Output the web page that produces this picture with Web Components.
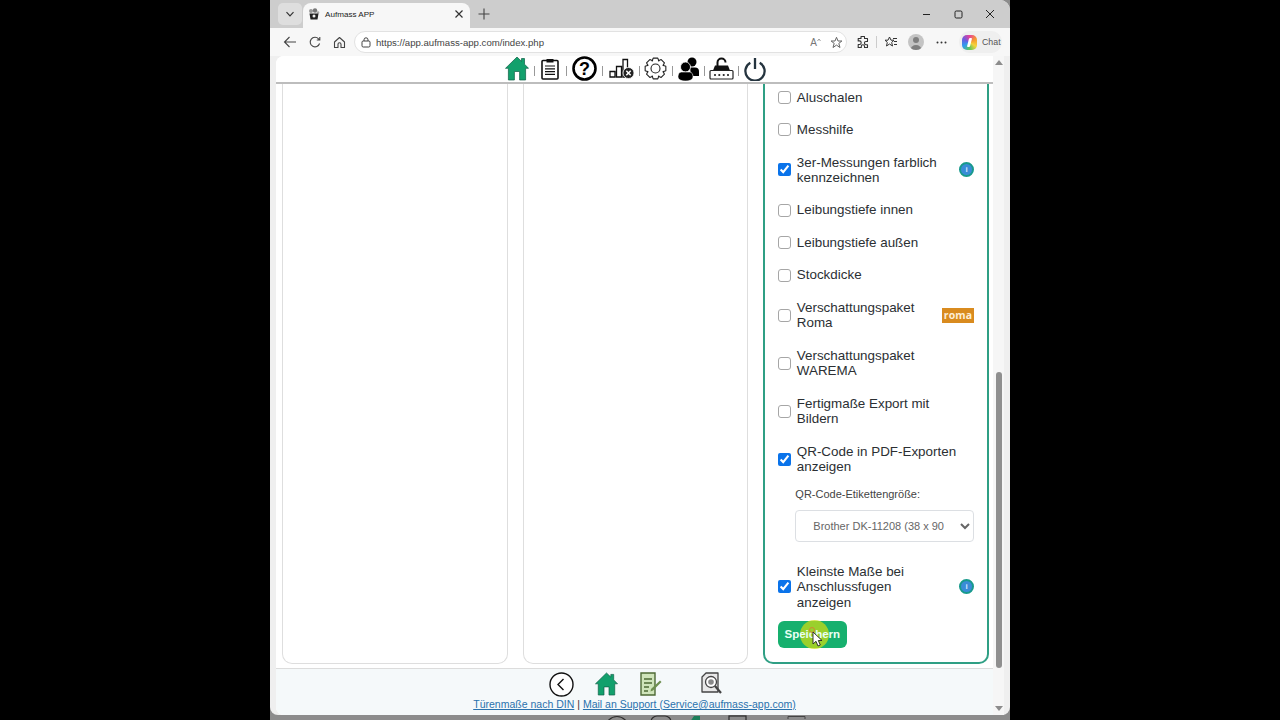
<!DOCTYPE html>
<html lang="de"><head><meta charset="utf-8"><title>Aufmass APP</title>
<style>
html,body{margin:0;height:100%;background:#000;overflow:hidden;font-family:"Liberation Sans",Arial,sans-serif}
body{display:flex;justify-content:center}
</style></head>
<body>
<browser-window>
  <tab-strip slot="tabs"></tab-strip>
  <browser-toolbar slot="toolbar"></browser-toolbar>
  <app-page slot="page">
    <app-nav slot="nav"></app-nav>
    <side-panel slot="col"></side-panel>
    <side-panel slot="col"></side-panel>
    <settings-card slot="col">
      <check-row>Aluschalen</check-row>
      <check-row>Messhilfe</check-row>
      <check-row checked info>3er-Messungen farblich kennzeichnen</check-row>
      <check-row>Leibungstiefe innen</check-row>
      <check-row>Leibungstiefe außen</check-row>
      <check-row>Stockdicke</check-row>
      <check-row roma>Verschattungspaket Roma</check-row>
      <check-row>Verschattungspaket WAREMA</check-row>
      <check-row>Fertigmaße Export mit Bildern</check-row>
      <check-row checked>QR-Code in PDF-Exporten anzeigen</check-row>
      <label-select label="QR-Code-Etikettengröße:" value="Brother DK-11208 (38 x 90 mm)"></label-select>
      <check-row checked info>Kleinste Maße bei<br>Anschlussfugen<br>anzeigen</check-row>
      <save-button>Speichern</save-button>
    </settings-card>
    <app-footer slot="footer"></app-footer>
  </app-page>
</browser-window>
<script>
function def(name, html){
  customElements.define(name, class extends HTMLElement{
    constructor(){super();const r=this.attachShadow({mode:'open'});r.innerHTML=typeof html==='function'?html(this):html;}
  });
}
const HOME=(w,h)=>`<svg width="${w}" height="${h}" viewBox="0 0 24 25"><path d="M12 1 L16.5 5.3 V2.5 H19.5 V8.2 L23.5 12.3 H20.6 V24 H14.6 V15.5 H9.4 V24 H3.4 V12.3 H.5 Z" fill="#12a06c" stroke="#0d5f45" stroke-width=".7" stroke-linejoin="round"/></svg>`;

def('browser-window',`<style>
:host{display:flex;flex-direction:column;width:740px;height:720px;background:#8c8c8c;position:relative}
.frame{flex:1;display:flex;flex-direction:column;background:#efefef;min-height:0;border-radius:0 10px 8px 8px;overflow:hidden}
.behind{display:block;flex:none}
</style><div class="frame"><slot name="tabs"></slot><slot name="toolbar"></slot><slot name="page"></slot></div>
<svg class="behind" width="740" height="5" viewBox="0 0 740 5"><g fill="none" stroke="#2d2d2d" stroke-width="1.200"><circle cx="347" cy="13" r="11.500"/><rect x="381" y="1" width="20" height="14" rx="6"/><rect x="459" y="1" width="17" height="12"/></g><path d="M415 14 L424 1 L430 1 V14Z" fill="#1c7f5a"/><path d="M518 4V1.500H535V4" fill="none" stroke="#444"/></svg>`);

def('tab-strip',`<style>
:host{display:flex;align-items:flex-end;height:28px;background:#cdcdcd;box-sizing:border-box;padding-left:8px;flex:none}
.drop{width:24px;height:22px;background:#dedede;border-radius:5px;margin:0 1px 3px 0;display:flex;align-items:center;justify-content:center}
.tab{width:167px;height:25px;background:#f7f7f7;border-radius:8px 8px 0 0;display:flex;align-items:center;padding:0 6px 3px 5px;box-sizing:border-box;gap:5px;color:#222;font:8.100px "Liberation Sans",sans-serif}
.tab span{flex:1}
.plus{margin:0 0 3px 3px;width:22px;height:22px;display:flex;align-items:center;justify-content:center}
.sp{flex:1}
.win{display:flex;align-self:center;margin-right:4px}
.win div{width:32px;height:20px;display:flex;align-items:center;justify-content:center}
svg{display:block}
</style>
<div class="drop"><svg width="10" height="10" viewBox="0 0 10 10"><path d="M1.5 3.2 5 6.8 8.5 3.2" fill="none" stroke="#333" stroke-width="1.2"/></svg></div>
<div class="tab"><svg width="12" height="12" viewBox="0 0 12 12"><circle cx="3" cy="3" r="2" fill="#999"/><circle cx="7" cy="2.500" r="2.200" fill="#777"/><circle cx="10" cy="4.500" r="1.300" fill="#aaa"/><path d="M1.500 5.500H10.500L9.500 11.500H2.500Z" fill="#222"/><circle cx="6" cy="8" r="1.500" fill="#eee"/></svg><span>Aufmass APP</span><svg width="10" height="10" viewBox="0 0 10 10"><path d="M1.5 1.5 8.5 8.5 M8.5 1.5 1.5 8.5" stroke="#333" stroke-width="1.2"/></svg></div>
<div class="plus"><svg width="12" height="12" viewBox="0 0 12 12"><path d="M6 .5V11.5M.5 6H11.5" stroke="#444" stroke-width="1.1"/></svg></div>
<div class="sp"></div>
<div class="win"><div><svg width="9" height="9" viewBox="0 0 9 9"><path d="M1 4.5H8" stroke="#222" stroke-width="1"/></svg></div><div><svg width="9" height="9" viewBox="0 0 9 9"><rect x="1" y="1" width="7" height="7" rx="1.3" fill="none" stroke="#222"/></svg></div><div><svg width="10" height="10" viewBox="0 0 10 10"><path d="M1 1 9 9M9 1 1 9" stroke="#222" stroke-width="1"/></svg></div></div>`);

def('browser-toolbar',`<style>
:host{display:flex;align-items:center;height:28px;background:#f7f7f7;flex:none;padding-left:7px;box-sizing:border-box;color:#444}
.b{width:25px;display:flex;justify-content:center;flex:none}
.addr{width:493px;height:22px;margin-left:2px;background:#fff;border:1px solid #e2e2e2;border-radius:11px;box-sizing:border-box;display:flex;align-items:center;padding:0 3px 0 6px;gap:5px;font:9.600px "Liberation Sans",sans-serif;color:#444}
.addr span{flex:1}
.A{font-size:10px;color:#777;font-weight:400;margin-right:4px}
.sep{width:1px;height:12px;background:#ccc;flex:none}
.avatar{width:16px;height:16px;border-radius:50%;background:#c4c4c4;display:flex;align-items:center;justify-content:center;overflow:hidden}
.chat{margin-left:4px;width:43px;height:22px;background:#efefef;border-radius:11px;display:flex;align-items:center;gap:5px;padding-left:3px;box-sizing:border-box;font:8.800px "Liberation Sans",sans-serif;color:#555;flex:none}
.cp{width:15px;height:15px;border-radius:5px;background:conic-gradient(#e8419a,#f59a30,#f5d33c,#5fc75a,#2f9bf0,#6a5be0,#e8419a);position:relative;flex:none}
.cp i{position:absolute;left:6px;top:3px;width:3px;height:9px;background:#fff;transform:skewX(-14deg);border-radius:1px}
svg{display:block}
</style>
<div class="b"><svg width="14" height="14" viewBox="0 0 14 14"><path d="M13 7H1.5M6.5 2 1.5 7l5 5" fill="none" stroke="#444" stroke-width="1.1"/></svg></div>
<div class="b"><svg width="12" height="12" viewBox="0 0 12 12"><path d="M10.6 7.5A4.8 4.8 0 1 1 9.6 2.8L10.8 4M10.8 1V4H7.8" fill="none" stroke="#444" stroke-width="1.1"/></svg></div>
<div class="b"><svg width="13" height="13" viewBox="0 0 13 13"><path d="M1.5 6 6.5 1.5 11.5 6V11.5H8V8.2A1.5 1.5 0 0 0 5 8.2V11.5H1.5Z" fill="none" stroke="#444" stroke-width="1.1" stroke-linejoin="round"/></svg></div>
<div class="addr"><svg width="10" height="11" viewBox="0 0 10 11"><rect x="1" y="4" width="8" height="6" rx="1.2" fill="none" stroke="#444"/><path d="M3 4V2.8a2 2 0 0 1 4 0V4" fill="none" stroke="#444"/></svg><span>https://app.aufmass-app.com/index.php</span><b class="A">A<svg width="4" height="4" viewBox="0 0 4 4" style="display:inline-block;vertical-align:4px"><path d="M.5 3 2 1 3.500 3" fill="none" stroke="#777" stroke-width=".7"/></svg></b><svg width="13" height="13" viewBox="0 0 13 13"><path d="M6.5 1.3 8 5h3.9L8.8 7.4 10 11.5 6.5 9.1 3 11.5 4.2 7.4 1.1 5H5Z" fill="none" stroke="#666"/></svg></div>
<div class="b" style="width:27px;margin-left:2px"><svg width="14" height="14" viewBox="0 0 14 14"><path d="M5 1.5h3.500v2h3v3h-1.500a1.600 1.600 0 0 0 0 3.200h1.500v2.800H8.500v-1.200a1.600 1.600 0 0 0-3.200 0v1.200H2.200V9.500h1.200a1.800 1.800 0 0 0 0-3.600H2.200V3.500H5Z" fill="none" stroke="#333" stroke-width="1.1" stroke-linejoin="round"/></svg></div>
<div class="sep"></div>
<div class="b" style="width:28px"><svg width="14" height="13" viewBox="0 0 14 13"><path d="M5.500 1 7 4.200h3L7.700 6.400 8.500 10 5.500 8 2.500 10 3.300 6.400 1 4.200h3ZM9 2.500h4M10 5.500h3M10 8.500h3" fill="none" stroke="#333"/></svg></div>
<div class="b" style="width:22px"><div class="avatar"><svg width="16" height="16" viewBox="0 0 16 16"><circle cx="8" cy="6" r="3" fill="#7f7f7f"/><path d="M2.500 16a5.500 5 0 0 1 11 0Z" fill="#7f7f7f"/></svg></div></div>
<div class="b" style="width:28px"><svg width="11" height="3" viewBox="0 0 11 3"><circle cx="1.500" cy="1.500" r="1" fill="#333"/><circle cx="5.500" cy="1.500" r="1" fill="#333"/><circle cx="9.500" cy="1.500" r="1" fill="#333"/></svg></div>
<div class="chat"><div class="cp"><i></i></div>Chat</div>`);

def('app-page',`<style>
:host{flex:1;display:flex;min-height:0;margin-left:6px;margin-right:6px;background:#fff;border-radius:8px 0 0 8px;overflow:hidden}
.left{flex:1;min-width:0;display:flex;flex-direction:column}
.cols{flex:1;min-height:0;display:grid;grid-template-columns:repeat(3,1fr);gap:15px;padding:0 4px 4px 6px;overflow:hidden}
.bar{width:11px;flex:none;background:#f6f6f6;display:flex;flex-direction:column;align-items:center;box-sizing:border-box;padding-top:4px;position:relative}
.up{width:0;height:0;border:4px solid transparent;border-top:0;border-bottom:5px solid #8c8c8c;flex:none}
.dn{width:0;height:0;border:4px solid transparent;border-bottom:0;border-top:5px solid #8c8c8c;flex:none}
.th{width:6px;height:296px;background:#8f8f8f;border-radius:3px;margin-top:307px;flex:none}
.sp{flex:1}
</style><div class="left"><slot name="nav"></slot><div class="cols"><slot name="col"></slot></div><slot name="footer"></slot></div>
<div class="bar"><div class="up"></div><div class="th"></div><div class="sp"></div><div class="dn" style="margin-bottom:4px"></div></div>`);

function gear(){const t=8,o=10.6,i=8.2,c=11.5;let d='';for(let k=0;k<t;k++){const a=k*2*Math.PI/t;const pts=[[i,-.42],[o,-.22],[o,.22],[i,.42]];pts.forEach((p,j)=>{const x=c+p[0]*Math.cos(a+p[1]),y=c+p[0]*Math.sin(a+p[1]);d+=(k==0&&j==0?'M':'L')+x.toFixed(2)+' '+y.toFixed(2)+' ';});}return d+'Z';}

def('app-nav',()=>`<style>
:host{display:flex;justify-content:center;align-items:center;height:28px;box-sizing:border-box;flex:none;border-bottom:2px solid #bdbdbd;background:#fff;padding:0 0 1px 1px}
.c{display:flex;justify-content:center;align-items:center;flex:none}
.s{width:1px;height:10px;background:#999;flex:none;margin-top:4px}
svg{display:block}
</style>
<div class="c" style="width:34px">${HOME(24,25)}</div><div class="s"></div>
<div class="c" style="width:31px"><svg width="18" height="22" viewBox="0 0 18 22"><rect x="1" y="2.500" width="16" height="18.500" rx="1" fill="#fff" stroke="#111" stroke-width="1.600"/><rect x="5.500" y="1" width="7" height="3.500" fill="#111"/><path d="M4 8H14M4 10.800H14M4 13.600H14M4 16.400H14" stroke="#111" stroke-width="1.200"/></svg></div><div class="s"></div>
<div class="c" style="width:35px"><svg width="25" height="25" viewBox="0 0 25 25"><circle cx="12.500" cy="12.500" r="11" fill="#fff" stroke="#000" stroke-width="2.600"/><text x="12.500" y="19" text-anchor="middle" font-family="Liberation Sans" font-weight="700" font-size="18" fill="#000">?</text></svg></div><div class="s"></div>
<div class="c" style="width:36px"><svg width="25" height="21" viewBox="0 0 25 21" style="margin-left:1px"><path d="M1 13.500H6V19H1ZM7.500 8.500H12.500V19H7.500ZM14 1.500H18.500V19H14Z" fill="#fff" stroke="#111" stroke-width="1.300"/><circle cx="19.500" cy="15" r="5.500" fill="#222" stroke="#fff" stroke-width=".8"/><path d="M17.300 12.800 21.700 17.200M21.700 12.800 17.300 17.200" stroke="#fff" stroke-width="1.500"/></svg></div><div class="s"></div>
<div class="c" style="width:32px"><svg width="23" height="23" viewBox="0 0 23 23"><path d="${gear()}" fill="#fff" stroke="#222" stroke-width="1.100" stroke-linejoin="round"/><circle cx="11.500" cy="11.500" r="4.500" fill="none" stroke="#222" stroke-width="1.100"/></svg></div><div class="s"></div>
<div class="c" style="width:31px"><svg width="21" height="24" viewBox="0 0 21 24"><circle cx="14" cy="5" r="4.500" fill="#000"/><path d="M12 10.500h5a4 4 0 0 1 4 4V19H13Z" fill="#000"/><circle cx="7.500" cy="10" r="5" fill="#000" stroke="#fff" stroke-width=".8"/><path d="M3.500 15h8c2.500 0 3.500 2.500 3.500 4.500 0 3-3 4.500-7.500 4.500S0 22.500 0 19.500C0 17.500 1 15 3.500 15Z" fill="#000" stroke="#fff" stroke-width=".6"/></svg></div><div class="s"></div>
<div class="c" style="width:33px"><svg width="25" height="23" viewBox="0 0 25 23"><path d="M8.500 9V5.500a4 4 0 0 1 8 0" fill="none" stroke="#111" stroke-width="2"/><path d="M6 8.500h13l2 5H4Z" fill="#111"/><rect x="1" y="13.500" width="23" height="8.500" rx="1" fill="#fff" stroke="#222" stroke-width="1.200"/><g fill="#222"><circle cx="6" cy="18" r="1.100"/><circle cx="10.300" cy="18" r="1.100"/><circle cx="14.700" cy="18" r="1.100"/><circle cx="19" cy="18" r="1.100"/></g></svg></div><div class="s"></div>
<div class="c" style="width:32px"><svg width="22" height="24" viewBox="0 0 22 24"><path d="M6.300 5.700a9.600 9.600 0 1 0 9.400 0" fill="none" stroke="#25343f" stroke-width="2.300"/><path d="M11 1V12" stroke="#25343f" stroke-width="2.300"/></svg></div>`);

def('side-panel',`<style>
:host{display:block;min-width:0;border:1.500px solid #dedede;border-top:0;border-radius:0 0 10px 10px;background:#fff}
</style>`);

def('settings-card',`<style>
:host{display:block;min-width:0;border:2px solid #2f9f84;border-top:0;border-radius:0 0 10px 10px;background:#fff;overflow:hidden;box-sizing:border-box;position:relative}
.in{margin-top:-3px;padding:0 13px 0 12.500px}
</style><div class="in"><slot></slot></div>`);

def('check-row',(h)=>`<style>
:host{display:flex;align-items:center;gap:6px;padding:8.550px 0;font:13.400px/15.400px "Liberation Sans",sans-serif;color:#2b2f33}
input{margin:0;width:13px;height:13px;flex:none;accent-color:#0a73ea}
input:not(:checked){appearance:none;box-sizing:border-box;border:1.500px solid #a6a6a6;border-radius:3px;background:#fff}
.t{flex:1;min-width:0}
.i{width:15px;height:15px;border-radius:50%;background:#3a8cd6;box-sizing:border-box;border:2.500px solid #189a8c;flex:none;display:flex;align-items:center;justify-content:center;color:#cfe6ff;font:700 8px/1 "Liberation Sans",sans-serif}
.r{width:32px;height:15px;background:#d98b1f;flex:none;display:flex;align-items:center;justify-content:center;color:#fdeed6;font:700 10.500px/1 "Open Sans","Liberation Sans",sans-serif;letter-spacing:.1px}
</style><input type="checkbox" ${h.hasAttribute('checked')?'checked':''}><div class="t"><slot></slot></div>${h.hasAttribute('info')?'<div class="i">i</div>':''}${h.hasAttribute('roma')?'<div class="r">roma</div>':''}`);

def('label-select',(h)=>`<style>
:host{display:block;padding:4px 0 13.700px 17.500px;font:11px/14px "Liberation Sans",sans-serif;color:#444}
.l{margin-bottom:8.500px}
select{display:block;width:100%;height:32px;box-sizing:border-box;background:#fff;border:1px solid #dcdfe3;border-radius:4px;padding:0 13px 0 13px;color:#666;font:11px "Liberation Sans",sans-serif}
</style><div class="l">${h.getAttribute('label')}</div><select><option>${h.getAttribute('value')}</option></select>`);

def('save-button',`<style>
:host{display:inline-flex;align-items:center;justify-content:center;width:69px;height:27px;margin-top:2px;background:#16b06e;border-radius:6px;color:#e9fff4;font:700 11.500px "Liberation Sans",sans-serif;position:relative}
.halo{position:absolute;left:22px;top:-1px;width:29px;height:29px;border-radius:50%;background:rgba(205,220,20,.72)}
.dot{position:absolute;left:31px;top:6px;width:6px;height:6px;border-radius:50%;border:1px solid #d08a30;box-sizing:border-box}
svg{position:absolute;left:34px;top:10px}
span{position:relative}
</style><div class="halo"></div><span><slot></slot></span><div class="dot"></div><svg width="11" height="16" viewBox="0 0 11 16"><path d="M1 1V13L4 10.300 6 15 8.300 14 6.300 9.500H10Z" fill="#fff" stroke="#222" stroke-width=".9" stroke-linejoin="round"/></svg>`);

def('app-footer',`<style>
:host{display:block;height:47px;flex:none;box-sizing:border-box;background:#f5f9fa;border-top:1px solid #dcdcdc;font:10.530px/14px "Liberation Sans",sans-serif;text-align:center;padding-top:2px}
.ic{display:flex;justify-content:center;align-items:center;height:26px;padding-left:19px}
.c{display:flex;justify-content:center;flex:none}
a{color:#2a72ad;text-decoration:underline}
span{color:#333}
svg{display:block}
</style>
<div class="ic">
<div class="c" style="width:44px"><svg width="25" height="25" viewBox="0 0 25 25"><circle cx="12.500" cy="12.500" r="11.500" fill="#fff" stroke="#111" stroke-width="1.400"/><path d="M14.500 7 9 12.500 14.500 18" fill="none" stroke="#111" stroke-width="1.400"/></svg></div>
<div class="c" style="width:46px">${HOME(23,24)}</div>
<div class="c" style="width:44px"><svg width="22" height="24" viewBox="0 0 22 24"><path d="M1 1H15V23H1Z" fill="#cfe4ba" stroke="#4d6a35" stroke-width="1.400"/><path d="M4 7H12M4 11H12M4 15H9M4 19H8" stroke="#4d6a35" stroke-width="1.400"/><path d="M11 17 20 8.500 21.500 10 13 18.500 10.500 19.500Z" fill="#6e8f4f"/></svg></div>
<div class="c" style="width:76px"><svg width="21" height="24" viewBox="0 0 21 24"><path d="M5 1H17V20H1V5Z" fill="#e8e8e8" stroke="#444" stroke-width="1.300" stroke-linejoin="round"/><circle cx="10" cy="10" r="5.500" fill="#fff" stroke="#444" stroke-width="1.300"/><circle cx="10" cy="10" r="2.800" fill="#888"/><path d="M14 14 20 21" stroke="#444" stroke-width="2.200"/></svg></div>
</div>
<div><a>Türenmaße nach DIN</a> <span>|</span> <a>Mail an Support (Service@aufmass-app.com)</a></div>`);
</script>
</body></html>
